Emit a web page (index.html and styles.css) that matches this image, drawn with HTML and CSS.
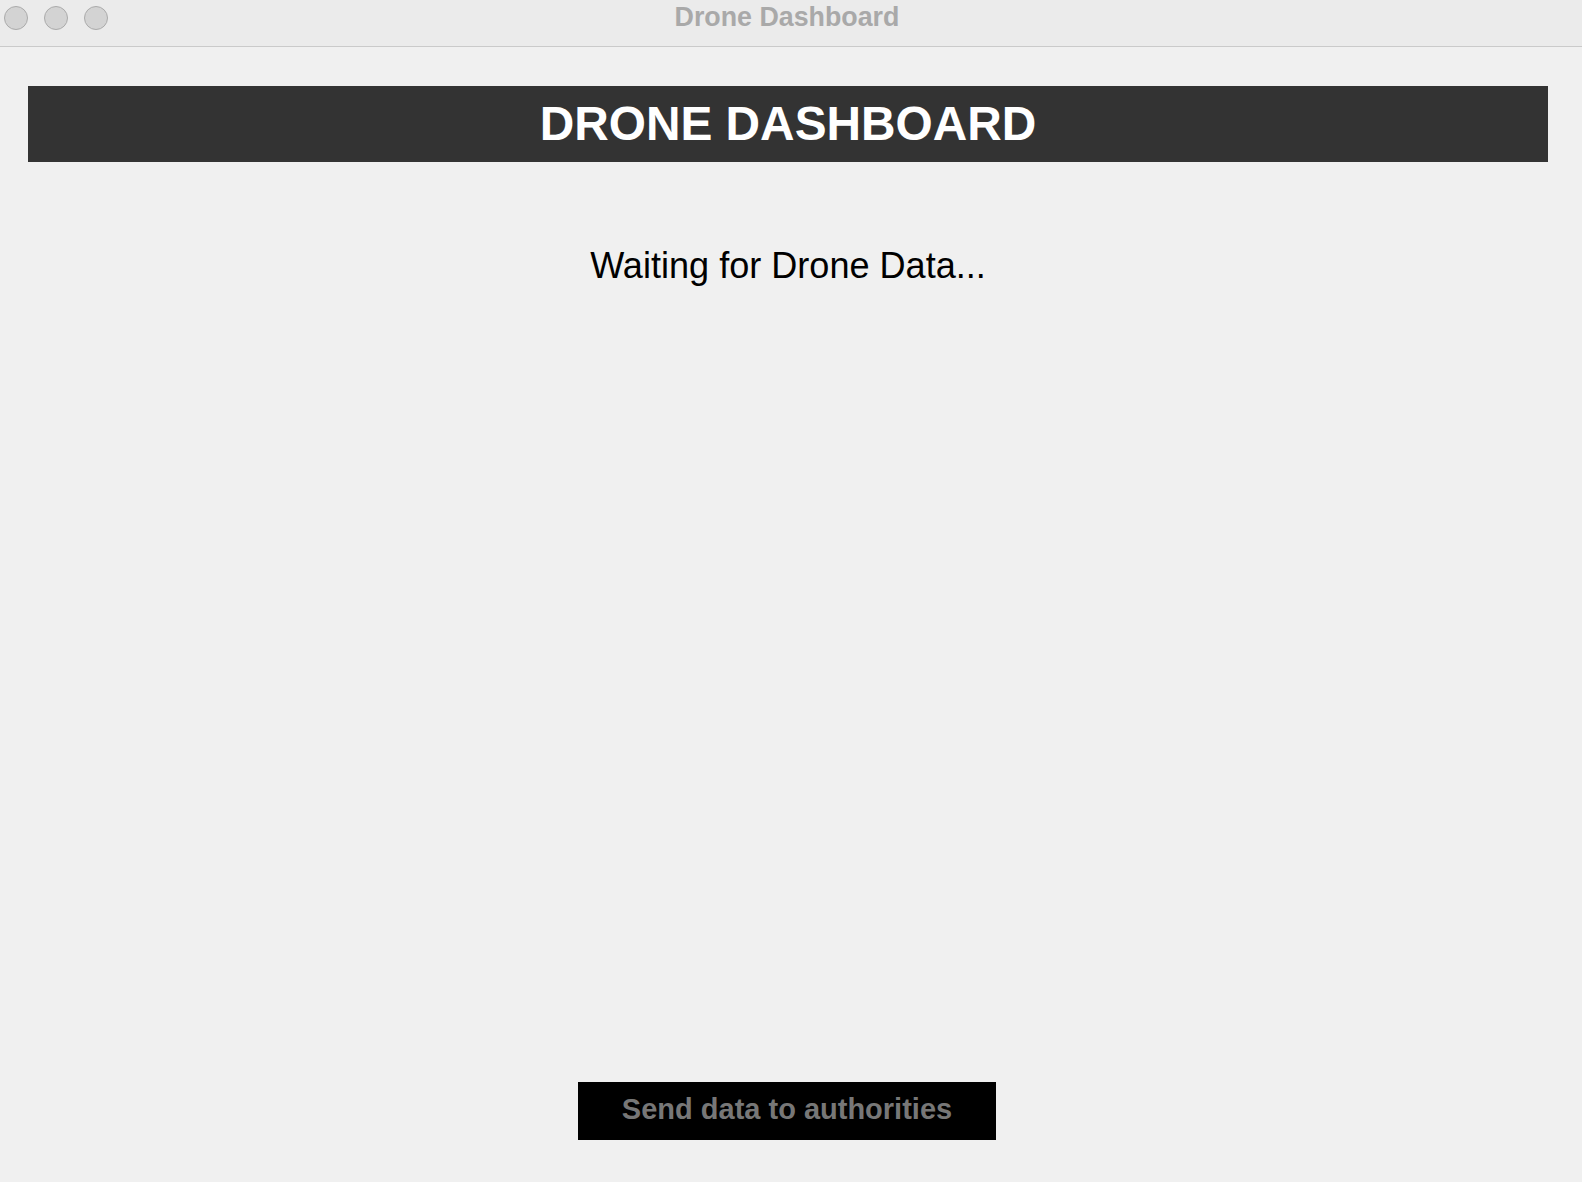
FILE: index.html
```html
<!DOCTYPE html>
<html lang="en">
<head>
<meta charset="utf-8">
<title>Drone Dashboard</title>
<link rel="stylesheet" href="styles.css">
</head>
<body>
<div class="window">
  <div class="titlebar">
    <div class="lights">
      <span class="light"></span>
      <span class="light"></span>
      <span class="light"></span>
    </div>
    <div class="window-title">Drone Dashboard</div>
  </div>
  <main class="content">
    <header class="banner">DRONE DASHBOARD</header>
    <p class="status">Waiting for Drone Data...</p>
    <div class="actions">
      <button class="send-btn" type="button">Send data to authorities</button>
    </div>
  </main>
</div>
</body>
</html>
```
FILE: styles.css
```css
html, body {
  margin: 0;
  padding: 0;
  height: 100%;
}
body {
  background: #f0f0f0;
  font-family: "Liberation Sans", Arial, sans-serif;
}
.window {
  display: flex;
  flex-direction: column;
  height: 100%;
}
.titlebar {
  position: relative;
  height: 46px;
  background: #ebebeb;
  border-bottom: 1px solid #cacaca;
  display: flex;
  align-items: center;
  justify-content: center;
  flex: none;
}
.lights {
  position: absolute;
  left: 4px;
  top: 6px;
  display: flex;
  gap: 16px;
}
.light {
  width: 22px;
  height: 22px;
  border-radius: 50%;
  background: #d3d3d3;
  border: 1px solid #ababab;
}
.window-title {
  font-weight: bold;
  font-size: 26.8px;
  color: #a9a9a9;
  margin-left: -8px;
  margin-top: -12px;
}
.content {
  flex: 1;
  display: flex;
  flex-direction: column;
  padding: 39px 34px 42px 28px;
}
.banner {
  background: #333333;
  color: #ffffff;
  height: 76px;
  display: flex;
  align-items: center;
  justify-content: center;
  font-weight: bold;
  font-size: 47.8px;
  padding-left: 0;
  padding-bottom: 2px;
  box-sizing: border-box;
}
.status {
  margin: 83px 0 0 0;
  text-align: center;
  font-size: 36.1px;
  color: #000;
}
.actions {
  margin-top: auto;
  display: flex;
  justify-content: center;
}
.send-btn {
  width: 418px;
  height: 58px;
  background: #000;
  border: none;
  color: #777777;
  font-family: "Liberation Sans", Arial, sans-serif;
  font-weight: bold;
  font-size: 29px;
  padding: 0 0 4px 0;
  margin-left: -2px;
}
```
